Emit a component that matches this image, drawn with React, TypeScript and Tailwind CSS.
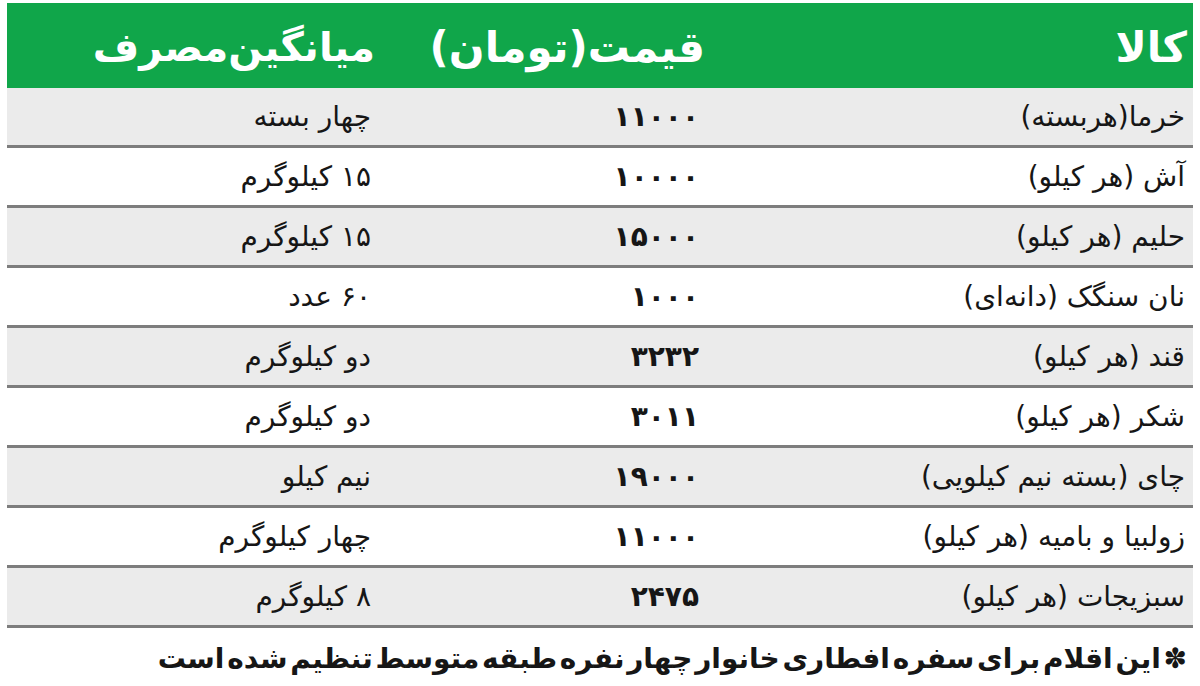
import React from "react";

const rows: [string, string, string][] = [
  ["خرما(هربسته)", "۱۱۰۰۰", "چهار بسته"],
  ["آش (هر کیلو)", "۱۰۰۰۰", "۱۵ کیلوگرم"],
  ["حلیم (هر کیلو)", "۱۵۰۰۰", "۱۵ کیلوگرم"],
  ["نان سنگک (دانه‌ای)", "۱۰۰۰", "۶۰ عدد"],
  ["قند (هر کیلو)", "۳۲۳۲", "دو کیلوگرم"],
  ["شکر (هر کیلو)", "۳۰۱۱", "دو کیلوگرم"],
  ["چای (بسته نیم کیلویی)", "۱۹۰۰۰", "نیم کیلو"],
  ["زولبیا و بامیه (هر کیلو)", "۱۱۰۰۰", "چهار کیلوگرم"],
  ["سبزیجات (هر کیلو)", "۲۴۷۵", "۸ کیلوگرم"],
];

export default function App() {
  return (
    <div
      dir="rtl"
      className="w-[1200px] h-[686px] bg-white overflow-hidden pt-[3px] px-[7px]"
      style={{ fontFamily: '"DejaVu Sans", sans-serif' }}
    >
      <div className="grid grid-cols-[486px_328px_1fr] h-[85px] bg-[#10a64a] items-center text-white font-bold text-[42px] pt-[3px]">
        <div className="pr-[6px]">کالا</div>
        <div className="pr-[2px]">قیمت(تومان)</div>
        <div className="pr-[4px] [word-spacing:-14px] text-[40px]">میانگین مصرف</div>
      </div>
      {rows.map((r, i) => (
        <div
          key={i}
          className={`grid grid-cols-[486px_328px_1fr] h-[60px] items-center text-[28px] text-[#161616] border-b-[3px] border-[#7d7d7d] ${
            i % 2 === 0 ? "bg-[#ebebeb]" : "bg-white"
          }`}
        >
          <div className="pr-[8px]">{r[0]}</div>
          <div className="pr-[8px] font-bold">{r[1]}</div>
          <div className="pr-[8px]">{r[2]}</div>
        </div>
      ))}
      <div className="pr-[6px] pt-[10px] text-[28px] text-[#161616] font-bold [word-spacing:-7px]">
        ✽ این اقلام برای سفره افطاری خانوار چهار نفره طبقه متوسط تنظیم شده است
      </div>
    </div>
  );
}
